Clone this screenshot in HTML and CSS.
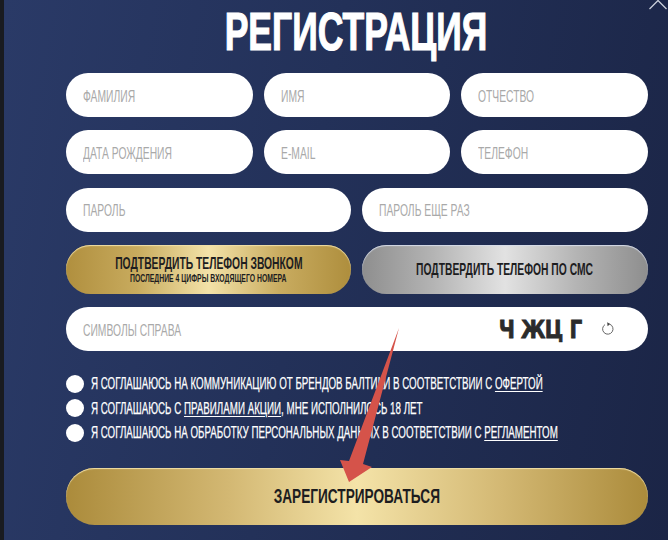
FILE: index.html
```html
<!DOCTYPE html>
<html lang="ru">
<head>
<meta charset="utf-8">
<title>Регистрация</title>
<link rel="stylesheet" href="styles.css">
</head>
<body>
<main class="panel">
  <svg class="close" width="20" height="10" viewBox="0 0 20 10"><path d="M1.5 9 L10 0.5 M10 0.5 L18.5 9" fill="none" stroke="#c9ced9" stroke-width="1.3"/></svg>
  <h1 class="title"><span>РЕГИСТРАЦИЯ</span></h1>
  <form class="form">
    <div class="row">
      <div class="field"><span class="ph">ФАМИЛИЯ</span></div>
      <div class="field"><span class="ph">ИМЯ</span></div>
      <div class="field"><span class="ph">ОТЧЕСТВО</span></div>
    </div>
    <div class="row">
      <div class="field"><span class="ph">ДАТА РОЖДЕНИЯ</span></div>
      <div class="field"><span class="ph">E-MAIL</span></div>
      <div class="field"><span class="ph">ТЕЛЕФОН</span></div>
    </div>
    <div class="row">
      <div class="field"><span class="ph">ПАРОЛЬ</span></div>
      <div class="field"><span class="ph">ПАРОЛЬ ЕЩЕ РАЗ</span></div>
    </div>
    <div class="row">
      <button type="button" class="btn gold">
        <span class="btn-main">ПОДТВЕРДИТЬ ТЕЛЕФОН ЗВОНКОМ</span>
        <span class="btn-sub">ПОСЛЕДНИЕ 4 ЦИФРЫ ВХОДЯЩЕГО НОМЕРА</span>
      </button>
      <button type="button" class="btn silver"><span class="btn-main">ПОДТВЕРДИТЬ ТЕЛЕФОН ПО СМС</span></button>
    </div>
    <div class="row captcha-row">
      <div class="field captcha">
        <span class="ph">СИМВОЛЫ СПРАВА</span>
        <span class="code">Ч ЖЦ Г</span>
        <svg class="reload" width="14" height="14" viewBox="0 0 14 14"><path d="M8.6 2.1 A5.2 5.2 0 1 1 4 2.6" fill="none" stroke="#666" stroke-width="1"/><path d="M6.2 0.2 L9.2 2.1 L6.6 4.2 Z" fill="#444"/></svg>
      </div>
    </div>
    <ul class="checks">
      <li class="check"><i class="dot"></i><span class="label">Я СОГЛАШАЮСЬ НА КОММУНИКАЦИЮ ОТ БРЕНДОВ БАЛТИКИ В СООТВЕТСТВИИ С <a href="#">ОФЕРТОЙ</a></span></li>
      <li class="check"><i class="dot"></i><span class="label">Я СОГЛАШАЮСЬ С <a href="#">ПРАВИЛАМИ АКЦИИ</a>, МНЕ ИСПОЛНИЛОСЬ 18 ЛЕТ</span></li>
      <li class="check"><i class="dot"></i><span class="label">Я СОГЛАШАЮСЬ НА ОБРАБОТКУ ПЕРСОНАЛЬНЫХ ДАННЫХ В СООТВЕТСТВИИ С <a href="#">РЕГЛАМЕНТОМ</a></span></li>
    </ul>
    <button type="button" class="submit"><span>ЗАРЕГИСТРИРОВАТЬСЯ</span></button>
  </form>
  <svg class="arrow" width="668" height="540" viewBox="0 0 668 540"><path d="M399 328 L363 464 L372 467 L349 482 L340 460 L349 461 Z" fill="#d5534a"/></svg>
</main>
</body>
</html>
```
FILE: styles.css
```css
* { box-sizing: border-box; }
html, body { margin: 0; height: 540px; overflow: hidden; background: #191b20; }
body { padding-left: 4px; font-family: "Liberation Sans", sans-serif; }
.panel { position: relative; width: 664px; height: 540px; padding: 0 20.5px 0 62px; overflow: hidden;
  background: linear-gradient(100deg, #2a3a67 0%, #233159 45%, #1b2546 100%); }
.close { position: absolute; left: 644px; top: 0; }
.arrow { position: absolute; left: -4px; top: 0; pointer-events: none; }
.title { margin: 0; height: 73px; padding: 2px 2px 0 0; text-align: center; font-size: 53px; line-height: 60px; font-weight: 700; color: #fff; }
.title span { display: inline-block; transform: scaleX(.67); -webkit-text-stroke: 1.2px #fff; }
.form { display: flex; flex-direction: column; }
.row { display: flex; gap: 11px; margin-bottom: 13.3px; }
.field { flex: 1 1 0; height: 44px; border-radius: 22px; background: #fff; padding-left: 17px; display: flex; align-items: center; min-width: 0; }
.ph { display: inline-block; padding-top: 3px; font-size: 16px; color: #a9a9a9; transform: scaleX(.645); transform-origin: left center; white-space: nowrap; }
.btn { flex: 1 1 0; min-width: 0; height: 49px; border-radius: 25px; border: 0; padding: 0; display: flex; flex-direction: column; align-items: center; justify-content: center; gap: 1px; font-family: inherit; color: #1d1d1f; }
.gold { background: linear-gradient(90deg, #b08f3e 0%, #c8ab5e 25%, #f3e2a8 50%, #c9ac60 75%, #ae8e3d 100%); box-shadow: inset 0 1px 1px #f0dfa8; }
.silver { background: linear-gradient(90deg, #8e8e8e 0%, #b4b4b4 25%, #e2e2e2 50%, #b4b4b4 75%, #8e8e8e 100%); box-shadow: inset 0 1px 1px #d5dbe8; }
.btn-main { font-size: 16.5px; font-weight: 700; line-height: 18px; transform: scaleX(.625); white-space: nowrap; }
.btn-sub { font-size: 10px; font-weight: 700; line-height: 11px; transform: scaleX(.685); white-space: nowrap; }
.captcha-row { margin-bottom: 23.5px; }
.captcha { justify-content: flex-start; }
.code { margin-left: auto; font-family: "DejaVu Sans", sans-serif; font-weight: 700; font-size: 25px; line-height: 25px; color: #2b2b2b; letter-spacing: -1px; word-spacing: 1px; -webkit-text-stroke: .8px #2b2b2b; transform: scaleX(.8); transform-origin: right center; }
.reload { margin: 0 33px 0 19px; flex: none; }
.checks { list-style: none; margin: 0 0 26px; padding: 0; display: flex; flex-direction: column; gap: 6.5px; }
.check { display: flex; align-items: center; height: 18px; gap: 7px; }
.dot { width: 18px; height: 18px; border-radius: 50%; background: #fff; flex: none; }
.label { display: inline-block; padding-top: 1px; font-size: 16px; color: #fff; white-space: nowrap; -webkit-text-stroke: .25px #fff; transform: scaleX(.61); transform-origin: left center; }
.label a { color: #fff; text-decoration: underline; text-underline-offset: 2px; }
.submit { height: 57px; border: 0; border-radius: 29px; padding: 1px 0 0; font-family: inherit; color: #1d1d1f; font-size: 19.5px; font-weight: 700;
  background: linear-gradient(90deg, #ab8b3b 0%, #d3b873 28%, #f4e3a8 50%, #d3b873 75%, #ab8b3b 100%); box-shadow: inset 0 1px 1px #f0dfa8; }
.submit span { display: inline-block; transform: scaleX(.7); }
```
